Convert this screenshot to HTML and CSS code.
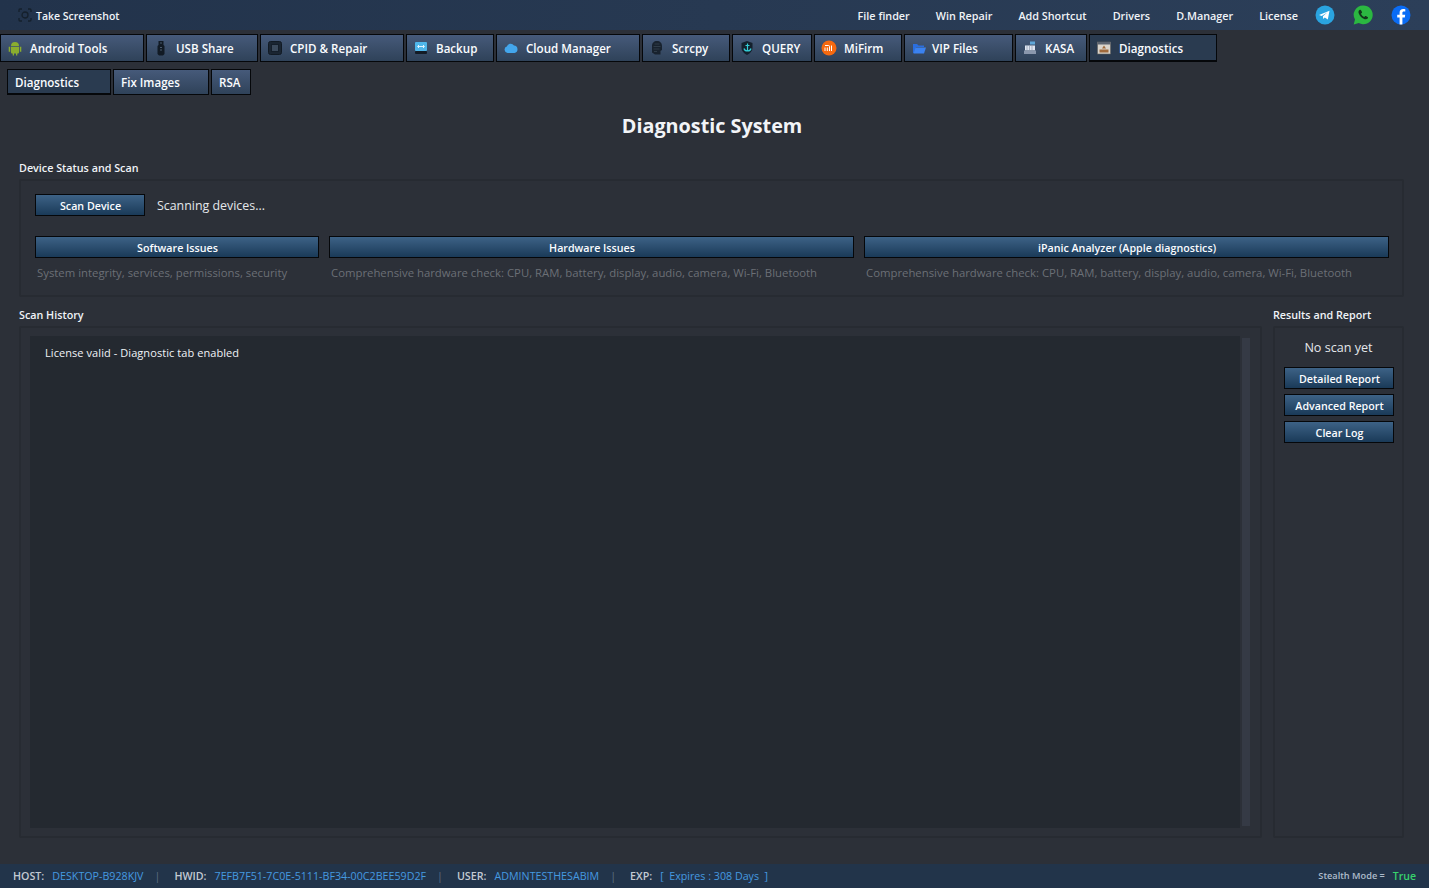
FILE: index.html
```html
<!DOCTYPE html>
<html lang="en">
<head>
<meta charset="utf-8">
<title>Diagnostic System</title>
<link rel="stylesheet" href="styles.css">
</head>
<body>
<div class="app">
  <header class="topbar">
    <div class="shot">
      <svg class="shot-icon" viewBox="0 0 14 14" width="14" height="14"><path d="M1 4V2a1 1 0 0 1 1-1h2M10 1h2a1 1 0 0 1 1 1v2M13 10v2a1 1 0 0 1-1 1h-2M4 13H2a1 1 0 0 1-1-1v-2" fill="none" stroke="#15202c" stroke-width="1.3"/><circle cx="7" cy="7" r="3" fill="none" stroke="#15202c" stroke-width="1.3"/></svg>
      <span class="shot-label">Take Screenshot</span>
    </div>
    <nav class="toplinks">
      <span class="tl tl-1">File finder</span>
      <span class="tl tl-2">Win Repair</span>
      <span class="tl tl-3">Add Shortcut</span>
      <span class="tl tl-4">Drivers</span>
      <span class="tl tl-5">D.Manager</span>
      <span class="tl tl-6">License</span>
    </nav>
    <div class="social">
      <svg viewBox="0 0 20 20" width="20" height="20"><circle cx="10" cy="10" r="9.5" fill="#2aa4e0"/><path d="M4 10l10.500-4.200-1.700 8.800-3-2.200-1.600 1.600-.3-2.700 4.600-4-5.800 3.600z" fill="#fff"/></svg>
      <svg viewBox="0 0 20 20" width="20" height="20"><path d="M10 .5a9.300 9.300 0 0 0-8 14L.7 19.400l5-1.300A9.400 9.400 0 1 0 10 .5z" fill="#2bb741"/><path d="M6.600 5c-1 .6-1.400 1.800-.9 3.200 1 2.800 3.200 5 6 6 1.400.4 2.500 0 3.200-1 .3-.6.2-1-.3-1.300l-1.700-.9c-.4-.2-.7-.1-1 .3l-.6.7c-1.500-.6-2.700-1.800-3.300-3.300l.7-.6c.4-.3.5-.6.3-1L8.200 5.400C7.900 4.900 7.200 4.700 6.600 5z" fill="#12351c"/></svg>
      <svg viewBox="0 0 20 20" width="20" height="20"><circle cx="10" cy="10" r="9.500" fill="#0a6cf5"/><path d="M11.400 19.500v-7h2.400l.4-2.800h-2.800V8c0-.8.3-1.400 1.500-1.400h1.400V4.200c-.7-.1-1.400-.2-2.100-.2-2.200 0-3.600 1.300-3.600 3.700v2H6.200v2.800h2.400v7z" fill="#fff"/></svg>
    </div>
  </header>

  <div class="tabs">
    <div class="tab w-144"><svg class="ico" viewBox="0 0 16 16"><path d="M4 6a4 4 0 0 1 8 0zM4 6.800h8v5.700a1 1 0 0 1-1 1h-.7v2H9v-2H7v2H5.700v-2H5a1 1 0 0 1-1-1zM1.700 6.800h1.500v5H1.700zM12.800 6.800h1.500v5h-1.500z" fill="#8aad2e"/></svg>Android Tools</div>
    <div class="tab w-112"><svg class="ico" viewBox="0 0 16 16"><path d="M5.500 1h5v4l1 1v8l-1.500 1.500H6L4.500 14V6l1-1z" fill="#111a24"/><path d="M7 7h2v1H7zM7 9.500h2v1H7zM7 2.500h2v1H7z" fill="#4a5a6c"/></svg>USB Share</div>
    <div class="tab w-144"><svg class="ico" viewBox="0 0 16 16"><rect x="1.500" y="1.500" width="13" height="13" rx="2" fill="#1a2532" stroke="#111a24"/><rect x="4.500" y="4.500" width="7" height="7" fill="#3b4a5c" stroke="#141e2a"/></svg>CPID &amp; Repair</div>
    <div class="tab w-88"><svg class="ico" viewBox="0 0 16 16"><rect x="2" y="2" width="12" height="9" rx="1" fill="#4fb6ea"/><path d="M5 6.500h6M6 5L4.500 6.500 6 8M10 5l1.500 1.500L10 8" fill="none" stroke="#dff4ff"/><rect x="2" y="11" width="12" height="3" rx="1" fill="#141c26"/></svg>Backup</div>
    <div class="tab w-144"><svg class="ico" viewBox="0 0 16 16"><path d="M4.500 13a3.300 3.300 0 0 1-.7-6.400A4 4 0 0 1 11 5.500 3.800 3.800 0 0 1 11.500 13z" fill="#43a6ec"/></svg>Cloud Manager</div>
    <div class="tab w-88"><svg class="ico" viewBox="0 0 16 16"><path d="M8 1c3 0 5 2 5 5v4l-1.500 1v3.500H6l-3-2V6c0-3 2-5 5-5z" fill="#18222e"/><path d="M5.500 4h5M4.500 6.500h7M4.500 9h6M5 11.500h3" stroke="#36434f" stroke-width=".8"/></svg>Scrcpy</div>
    <div class="tab w-80"><svg class="ico" viewBox="0 0 16 16"><path d="M8 1l5.500 2v5c0 3-2.500 5.500-5.500 7-3-1.500-5.500-4-5.500-7V3z" fill="#14202c"/><path d="M8.500 3.500v7M6.500 5.500h4M5 8.500c.5 2 2 2.500 3.500 2.500s3-.5 3.500-2.500" fill="none" stroke="#33cdd6" stroke-width="1.200"/></svg>QUERY</div>
    <div class="tab w-88"><svg class="ico" viewBox="0 0 16 16"><circle cx="8" cy="8" r="7.500" fill="#f5690f"/><path d="M4 5.500h3.500a1 1 0 0 1 1 1V11M4 11V7.500M6.300 11V7.500M10.500 5.500V11" fill="none" stroke="#fff"/></svg>MiFirm</div>
    <div class="tab w-109"><svg class="ico ico-vip" viewBox="0 0 16 16"><path d="M2 4h4l1.500 1.500H13V7H5l-2 6H2z" fill="#2a6ee0"/><path d="M4.500 7.500H15l-2 6H2.500z" fill="#3b82f0"/></svg>VIP Files</div>
    <div class="tab w-72"><svg class="ico" viewBox="0 0 16 16"><rect x="8" y="1.500" width="5" height="3" fill="#5fa6d8"/><rect x="3" y="5.500" width="10" height="5" fill="#dfe5f0"/><path d="M4.500 7h1M7 7h1M9.500 7h1M4.500 9h1M7 9h1M9.500 9h1" stroke="#6a7890"/><rect x="2" y="10.500" width="12" height="3.500" fill="#8a97ad"/></svg>KASA</div>
    <div class="tab tab-on w-128"><svg class="ico" viewBox="0 0 16 16"><rect x="1.500" y="2" width="13" height="12" fill="#d9d4cc" stroke="#60605c" stroke-width=".6"/><rect x="1.500" y="2" width="13" height="2.500" fill="#5c6470"/><path d="M8 5.500l2 3H6zM3.500 9.500h9v3h-9z" fill="#a06a3c"/></svg>Diagnostics</div>
  </div>

  <div class="subtabs">
    <div class="subtab subtab-on w-104">Diagnostics</div>
    <div class="subtab w-96">Fix Images</div>
    <div class="subtab w-40">RSA</div>
  </div>

  <h1 class="title">Diagnostic System</h1>

  <main class="content">
    <section class="scan-section">
      <h2 class="group-title">Device Status and Scan</h2>
      <div class="panel scan-panel">
        <div class="scan-row">
          <button class="btn btn-scan">Scan Device</button>
          <span class="scan-status">Scanning devices...</span>
        </div>
        <div class="cats">
          <div class="cat cat-a">
            <button class="btn">Software Issues</button>
            <p class="hint">System integrity, services, permissions, security</p>
          </div>
          <div class="cat cat-b">
            <button class="btn">Hardware Issues</button>
            <p class="hint">Comprehensive hardware check: CPU, RAM, battery, display, audio, camera, Wi-Fi, Bluetooth</p>
          </div>
          <div class="cat cat-b">
            <button class="btn">iPanic Analyzer (Apple diagnostics)</button>
            <p class="hint">Comprehensive hardware check: CPU, RAM, battery, display, audio, camera, Wi-Fi, Bluetooth</p>
          </div>
        </div>
      </div>
    </section>

    <section class="lower">
      <div class="history">
        <h2 class="group-title">Scan History</h2>
        <div class="panel history-panel">
          <div class="log"><p class="log-line">License valid - Diagnostic tab enabled</p></div>
          <div class="scrollbar"></div>
        </div>
      </div>
      <div class="results">
        <h2 class="group-title">Results and Report</h2>
        <div class="panel results-panel">
          <p class="no-scan">No scan yet</p>
          <button class="btn btn-report">Detailed Report</button>
          <button class="btn btn-report">Advanced Report</button>
          <button class="btn btn-report">Clear Log</button>
        </div>
      </div>
    </section>
  </main>

  <footer class="statusbar">
    <b class="k">HOST:</b><span class="v v-host">DESKTOP-B928KJV</span><span class="sep">|</span>
    <b class="k">HWID:</b><span class="v v-hwid">7EFB7F51-7C0E-5111-BF34-00C2BEE59D2F</span><span class="sep">|</span>
    <b class="k">USER:</b><span class="v v-user">ADMINTESTHESABIM</span><span class="sep">|</span>
    <b class="k">EXP:</b><span class="v v-exp">[&nbsp; Expires : 308 Days &nbsp;]</span>
    <span class="stealth">Stealth Mode =</span><span class="true">True</span>
  </footer>
</div>
</body>
</html>
```

FILE: styles.css
```css
* { box-sizing: border-box; }
html, body { margin: 0; height: 100%; }
body {
  background: #2c3038;
  color: #f0f3f7;
  font-family: "Open Sans", "Noto Sans", "Liberation Sans", sans-serif;
  font-size: 11px;
  overflow: hidden;
}
.app { width: 1429px; height: 888px; display: flex; flex-direction: column; }

.topbar {
  height: 30px;
  flex: none;
  display: flex;
  align-items: center;
  background: linear-gradient(90deg, #22334b 0%, #2c3f59 100%);
  padding-left: 18px;
  font-weight: 600;
  font-size: 10.8px;
}
.shot { display: flex; align-items: center; gap: 4px; font-size: 10.500px; }
.shot-label { padding-top: 1px; }
.shot-icon { display: block; }
.toplinks { margin-left: auto; display: flex; }
.tl { display: block; }
.tl-2, .tl-3, .tl-4, .tl-5, .tl-6 { margin-left: 26px; }
.social { display: flex; gap: 18px; margin-left: 17px; margin-right: 18px; }
.social svg { display: block; }

.tabs { display: flex; gap: 2px; margin-top: 4px; height: 28px; flex: none; }
.tab, .subtab {
  display: flex;
  align-items: center;
  border: 1px solid #05070a;
  background: linear-gradient(180deg, #465a7a 0%, #2f4259 100%);
  font-weight: 600;
  font-size: 11.600px;
  color: #fafcff;
}
.tab { padding-left: 8px; }
.ico { width: 16px; height: 16px; margin-right: 7px; margin-left: -2px; flex: none; display: block; }
.ico-vip { margin-right: 5px; }
.tab-on, .subtab-on {
  background: #2a3b50;
  border-bottom-width: 2px;
  padding-top: 1px;
}
.w-144 { width: 144px; }
.w-112 { width: 112px; }
.w-88 { width: 88px; }
.w-80 { width: 80px; }
.w-109 { width: 109px; }
.w-72 { width: 72px; }
.w-128 { width: 128px; }
.w-104 { width: 104px; }
.w-96 { width: 96px; }
.w-40 { width: 40px; }

.subtabs { display: flex; gap: 2px; margin-top: 7px; padding-left: 7px; height: 26px; flex: none; }
.subtab { padding-left: 7px; }

.title {
  margin: 16px 5px 0 0;
  height: 30px;
  line-height: 29px;
  text-align: center;
  font-size: 19.800px;
  font-weight: 700;
  color: #f2f4f7;
  flex: none;
}

.content {
  flex: 1;
  min-height: 0;
  padding: 0 25px 0 19px;
  display: flex;
  flex-direction: column;
}
.group-title {
  margin: 0;
  height: 16px;
  line-height: 16px;
  font-size: 10.750px;
  font-weight: 600;
  color: #f0f3f7;
  flex: none;
}
.panel {
  border: 2px solid #272b32;
  border-radius: 2px;
  background: #2c3038;
}
.scan-section { margin-top: 19px; flex: none; }
.scan-section .group-title { margin-bottom: 3px; }
.scan-panel { height: 118px; padding: 13px 14px 0 14px; }
.scan-row { display: flex; align-items: center; height: 22px; gap: 12px; }
.btn {
  display: block;
  height: 22px;
  padding: 1px 0 0 1px;
  border: 1px solid #05070a;
  background: linear-gradient(180deg, #3d6286 0%, #1a3a58 100%);
  color: #fafcff;
  font-family: inherit;
  font-size: 10.700px;
  font-weight: 600;
  text-align: center;
}
.btn-scan { width: 110px; }
.scan-status { font-size: 12.400px; color: #e4e7eb; }
.cats { display: flex; gap: 10px; margin-top: 20px; }
.cat { flex: none; }
.cat .btn { width: 100%; }
.cat-a { width: 284px; }
.cat-b { width: 525px; }
.hint {
  margin: 6px 0 0 2px;
  font-size: 11.350px;
  line-height: 18px;
  color: #6b6f76;
  white-space: nowrap;
}

.lower { display: flex; gap: 11px; flex: 1; min-height: 0; margin-top: 10px; }
.lower .group-title { margin-bottom: 3px; }
.history { width: 1243px; flex: none; display: flex; flex-direction: column; }
.results { width: 131px; flex: none; display: flex; flex-direction: column; }
.history-panel {
  height: 512px;
  padding: 8px 10px 8px 9px;
  display: flex;
  gap: 2px;
}
.log { flex: 1; background: #242930; padding: 9px 15px; }
.log-line { margin: 0; font-size: 11px; line-height: 16px; color: #f0f3f7; letter-spacing: .07px; }
.scrollbar { width: 8px; margin: 2px 0; background: #353a45; flex: none; }

.results-panel { height: 512px; padding: 0 9px; display: flex; flex-direction: column; gap: 5px; }
.no-scan { margin: 10px 0 4px; text-align: center; font-size: 12.600px; line-height: 20px; color: #e4e7eb; }
.btn-report { width: 110px; flex: none; }

.statusbar {
  height: 24px;
  flex: none;
  background: #22344a;
  display: flex;
  align-items: center;
  padding: 0 13px 1px;
  margin-top: auto;
  font-size: 10.700px;
  white-space: nowrap;
}
.k { color: #c3cad3; font-weight: 600; }
.v { color: #459ae0; margin-left: 8px; }
.sep { color: #5d6f82; margin: 0 14px 0 11px; }
.stealth { margin-left: auto; font-size: 9.200px; font-weight: 600; color: #aebccb; }
.true { margin-left: 8px; color: #37d26c; font-weight: 600; font-size: 10.500px; }
```
